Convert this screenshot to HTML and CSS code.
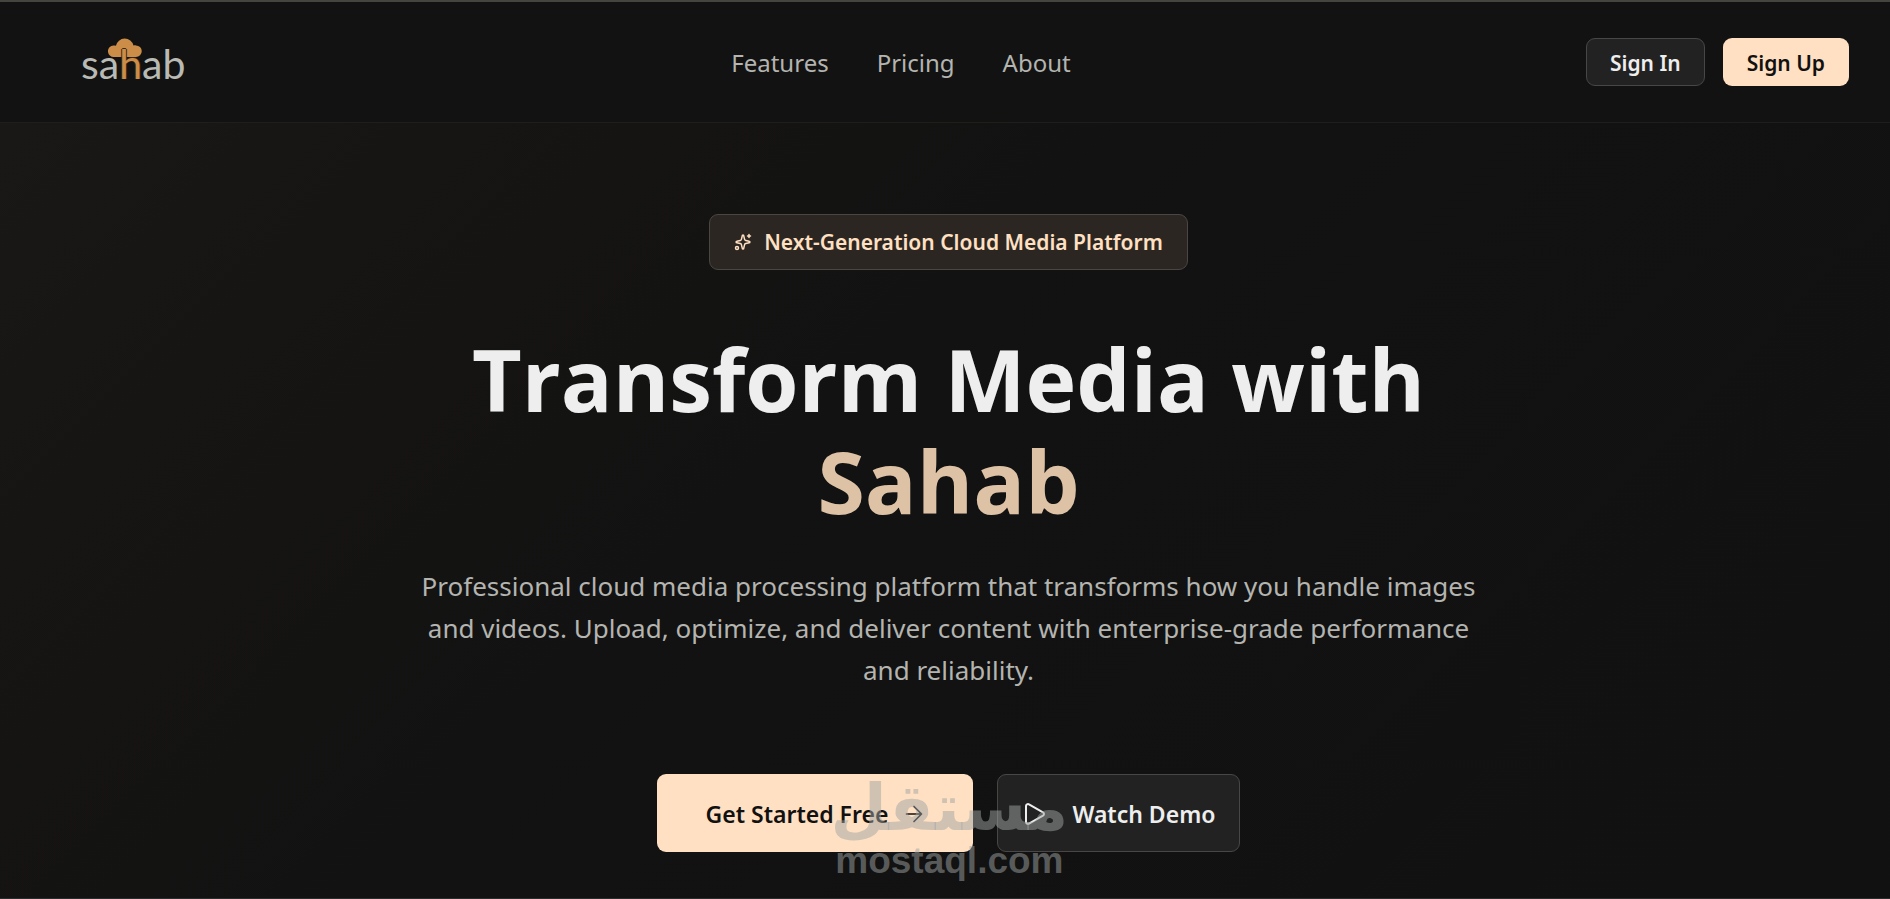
FILE: index.html
```
<!DOCTYPE html>
<html lang="en">
<head>
    <meta charset="UTF-8">
    <meta name="viewport" content="width=device-width, initial-scale=1.0">
    <title>Sahab</title>
    <link rel="stylesheet" href="styles.css">
</head>
<body>
    <header class="header">
        <a class="logo" href="#" aria-label="sahab">
            <svg class="logo-cloud" viewBox="0 0 34 20" aria-hidden="true">
                <path d="M6 19a5.800 5.800 0 0 1-.5-11.600c.9 0 1.700.1 2.400.4a9 9 0 0 1 17.600-.2c.8-.2 1.600-.3 2.400-.2A5.800 5.800 0 0 1 28 19z"/>
            </svg>
            <span>sa<span class="logo-h">h</span>ab</span>
        </a>
        <nav class="nav">
            <a href="#features">Features</a>
            <a href="#pricing">Pricing</a>
            <a href="#about">About</a>
        </nav>
        <div class="actions">
            <button type="button" class="btn btn-dark">Sign In</button>
            <button type="button" class="btn btn-light">Sign Up</button>
        </div>
    </header>

    <main class="hero">
        <div class="badge">
            <svg class="icon icon-small" viewBox="0 0 24 24" aria-hidden="true">
                <path d="M11 3.800a1 1 0 0 1 2 0l1.100 4.600a2 2 0 0 0 1.500 1.500l4.600 1.100a1 1 0 0 1 0 2l-4.600 1.100a2 2 0 0 0-1.500 1.500L13 20.200a1 1 0 0 1-2 0l-1.100-4.600a2 2 0 0 0-1.500-1.500L3.800 13a1 1 0 0 1 0-2l4.600-1.100a2 2 0 0 0 1.500-1.500z"/>
                <path d="M20 2v4M22 4h-4"/>
                <circle cx="4" cy="20" r="2"/>
            </svg>
            <span>Next-Generation Cloud Media Platform</span>
        </div>

        <h1>Transform Media with <span class="brand">Sahab</span></h1>

        <p class="lead">Professional cloud media processing platform that transforms how you handle images and videos. Upload, optimize, and deliver content with enterprise-grade performance and reliability.</p>

        <div class="cta">
            <button type="button" class="btn btn-light btn-large btn-start">
                Get Started Free
                <svg class="icon icon-arrow" viewBox="0 0 24 24" aria-hidden="true">
                    <path d="M3 12h18M12 3l9 9-9 9"/>
                </svg>
            </button>
            <button type="button" class="btn btn-dark btn-large">
                <svg class="icon" viewBox="0 0 24 24" aria-hidden="true">
                    <path d="M4 4a2 2 0 0 1 3-1.700l14 8a2 2 0 0 1 0 3.400l-14 8A2 2 0 0 1 4 20z"/>
                </svg>
                Watch Demo
            </button>
            <div class="watermark">
                <span class="watermark-ar" lang="ar">مستقل</span>
                <span class="watermark-en">mostaql.com</span>
            </div>
        </div>
    </main>
</body>
</html>
```
FILE: styles.css
```
* {
    box-sizing: border-box;
}

body {
    margin: 0;
    min-height: 100vh;
    background: linear-gradient(135deg, #1a1918 0%, #161513 20%, #121212 45%, #111111 100%);
    border-top: 2px solid #454540;
    border-bottom: 1px solid #2c2c2c;
    font-family: "Noto Sans", "Open Sans", sans-serif;
    color: #eeeeee;
}

.header {
    display: flex;
    justify-content: space-between;
    align-items: center;
    height: 121px;
    padding: 0 41px 0 48px;
    background-color: #121212;
    border-bottom: 1px solid #201e1b;
}

.logo {
    position: relative;
    isolation: isolate;
    width: 168px;
    padding: 4px 0 0 33px;
    font-family: "Lato", sans-serif;
    font-size: 41px;
    font-weight: 400;
    line-height: 48px;
    color: #b9bab4;
    text-decoration: none;
}

/* dark edge keeps the stem readable on the cloud */
.logo-h {
    color: #cb8d48;
    text-shadow: 1px 0 #3a2a18, -1px 0 #3a2a18, 0 -1px #3a2a18;
}

.logo-cloud {
    position: absolute;
    left: 60px;
    top: 2px;
    z-index: -1;
    width: 34px;
    height: 20px;
    fill: #cb8d48;
}

.nav {
    display: flex;
    gap: 48px;
}

.nav a {
    color: #b4b4b0;
    font-size: 24px;
    text-decoration: none;
}

.actions {
    display: flex;
    gap: 18px;
}

.btn {
    display: flex;
    align-items: center;
    justify-content: center;
    height: 48px;
    padding: 2px 23px 0;
    border: 1px solid transparent;
    border-radius: 9px;
    font-family: inherit;
    font-size: 21px;
    font-weight: 600;
    white-space: nowrap;
    cursor: pointer;
}

.btn-dark {
    background-color: #222222;
    border-color: #484745;
    color: #eeeeee;
}

.btn-light {
    background-color: #ffe0c2;
    color: #111111;
}

.hero {
    display: flex;
    flex-direction: column;
    align-items: center;
    padding: 91px 41px 46px 48px;
    text-align: center;
}

.badge {
    display: flex;
    align-items: center;
    gap: 12px;
    height: 56px;
    padding: 0 24px;
    background-color: #2c2622;
    border: 1px solid #4a4643;
    border-radius: 9px;
    color: #ffe0c2;
    font-size: 21px;
    font-weight: 600;
}

h1 {
    max-width: 1080px;
    margin: 58px 0 0;
    font-family: "Open Sans", "Noto Sans", sans-serif;
    font-size: 86px;
    font-weight: 700;
    line-height: 102px;
}

.brand {
    display: block;
    color: #dec2a6;
}

.lead {
    max-width: 1084px;
    margin: 33px 0 0;
    color: #b4b4b0;
    font-size: 26px;
    line-height: 42px;
}

.cta {
    position: relative;
    display: flex;
    gap: 24px;
    margin-top: 83px;
}

.btn-large {
    gap: 26px;
    height: 78px;
    padding: 2px 24px 0;
    font-size: 23px;
}

.btn-start {
    gap: 16px;
    padding: 2px 48px 0;
}

.icon {
    width: 24px;
    height: 24px;
    fill: none;
    stroke: currentColor;
    stroke-width: 2;
    stroke-linecap: round;
    stroke-linejoin: round;
}

.icon-small {
    width: 18px;
    height: 18px;
}

.icon-arrow {
    width: 20px;
    height: 20px;
}

.watermark {
    position: absolute;
    left: 174px;
    top: 0;
    display: flex;
    flex-direction: column;
    align-items: center;
    color: rgba(160, 164, 164, 0.5);
    font-weight: 700;
    pointer-events: none;
}

.watermark-ar {
    font-family: "DejaVu Sans", sans-serif;
    font-size: 65px;
    line-height: 68px;
}

.watermark-en {
    font-family: "Liberation Sans", sans-serif;
    font-size: 37px;
    line-height: 38px;
}
```
